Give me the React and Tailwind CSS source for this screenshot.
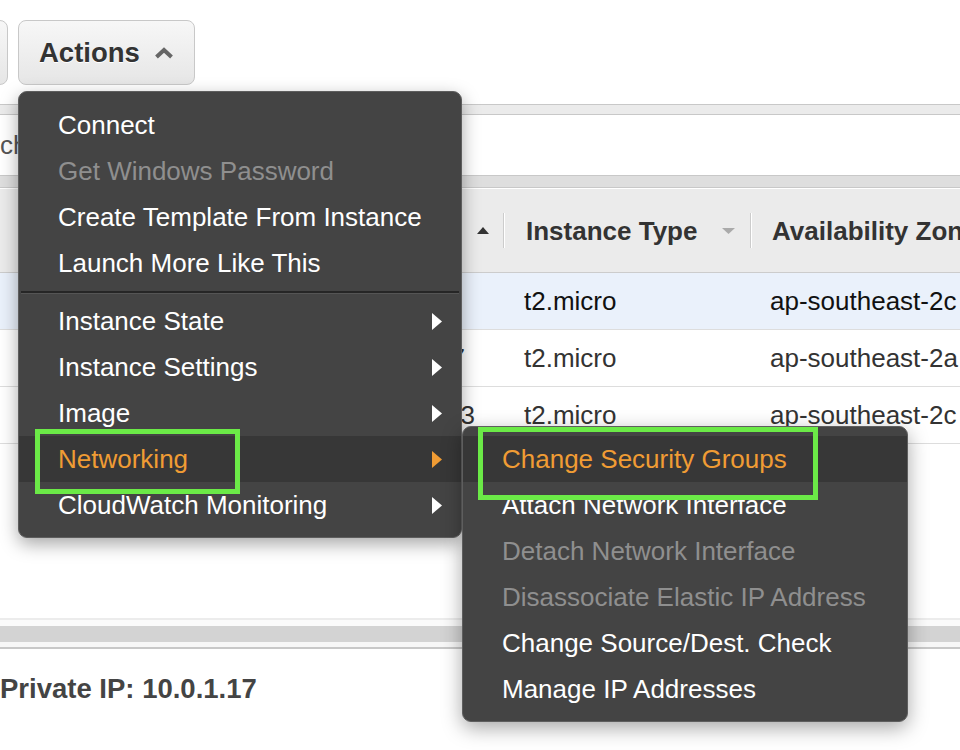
import React from "react";

const RightTri = ({ color = "#ffffff" }) => (
  <svg width="10" height="17" viewBox="0 0 10 17" className="shrink-0">
    <polygon points="0,0 10,8.5 0,17" fill={color} />
  </svg>
);

const mainItems = [
  { label: "Connect" },
  { label: "Get Windows Password", disabled: true },
  { label: "Create Template From Instance" },
  { label: "Launch More Like This" },
  { sep: true },
  { label: "Instance State", sub: true },
  { label: "Instance Settings", sub: true },
  { label: "Image", sub: true },
  { label: "Networking", sub: true, active: true },
  { label: "CloudWatch Monitoring", sub: true },
];

const subItems = [
  { label: "Change Security Groups", active: true },
  { label: "Attach Network Interface" },
  { label: "Detach Network Interface", disabled: true },
  { label: "Disassociate Elastic IP Address", disabled: true },
  { label: "Change Source/Dest. Check" },
  { label: "Manage IP Addresses" },
];

const rows = [
  { id: "i-0c4e9a1b7d2f3e6a5", type: "t2.micro", zone: "ap-southeast-2c", bg: "bg-[#eaf1fb]", color: "text-[#111111]", pad: "pr-[44px]" },
  { id: "i-07d1f2a3b4c5e6d7", type: "t2.micro", zone: "ap-southeast-2a", bg: "bg-white", color: "text-[#333333]", pad: "pr-[38px]" },
  { id: "i-0a9b8c7d6e5f4e3", type: "t2.micro", zone: "ap-southeast-2c", bg: "bg-white", color: "text-[#333333]", pad: "pr-[28px]" },
];

function MenuItem({ item }) {
  if (item.sep) {
    return (
      <div className="h-[12px] flex flex-col justify-center px-[2px]">
        <div className="h-[2px] bg-[#262626]" />
        <div className="h-[1px] bg-[#555555]" />
      </div>
    );
  }
  const color = item.active
    ? "text-[#f09c34]"
    : item.disabled
    ? "text-[#8f8f8f]"
    : "text-white";
  return (
    <div
      className={`h-[46px] flex items-center justify-between pl-[39px] pr-[19px] ${
        item.active ? "bg-[#373737]" : ""
      }`}
    >
      <span className={`${color} whitespace-nowrap`}>{item.label}</span>
      {item.sub && <RightTri color={item.active ? "#f09c34" : "#ffffff"} />}
    </div>
  );
}

export default function App() {
  return (
    <div className="relative w-[960px] h-[750px] overflow-hidden bg-white font-['Liberation_Sans',Arial,sans-serif] text-[26px] leading-none">
      {/* toolbar */}
      <div className="h-[104px] flex items-start pt-[20px] gap-[10px]">
        <div className="shrink-0 w-[40px] ml-[-32px] h-[65px] rounded-[8px] border border-[#c8c8c8] bg-gradient-to-b from-[#f7f7f7] to-[#e6e6e6]" />
        <div className="shrink-0 w-[177px] h-[65px] rounded-[8px] border border-[#c8c8c8] bg-gradient-to-b from-[#f7f7f7] to-[#e6e6e6] flex items-center pl-[20px] gap-[14px]">
          <span className="font-bold text-[27.5px] text-[#333333] [text-shadow:0_1px_0_#ffffff]">Actions</span>
          <svg width="20" height="12" viewBox="0 0 20 12">
            <polyline points="2.5,10 10,3 17.5,10" fill="none" stroke="#666666" strokeWidth="4" strokeLinejoin="miter" />
          </svg>
        </div>
      </div>

      {/* band 1 */}
      <div className="h-[11px] border-y border-[#c8c8c8] bg-[#ebebeb]" />

      {/* search */}
      <div className="h-[60px] flex items-center">
        <span className="shrink-0 ml-[-55px] text-[#555555]">Search</span>
      </div>

      {/* band 2 */}
      <div className="h-[13px] border-y border-[#c8c8c8] bg-[#dedede]" />
      <div className="h-[1px] bg-white" />

      {/* header */}
      <div className="h-[84px] flex items-center bg-[#ebebeb] border-b border-[#cccccc]">
        <div className="shrink-0 w-[503px] flex justify-end pr-[14px]">
          <svg width="12" height="7" viewBox="0 0 12 7">
            <polygon points="0,7 6,0 12,7" fill="#333333" />
          </svg>
        </div>
        <div className="shrink-0 w-[2px] h-[35px] border-l border-[#cccccc] bg-white" />
        <div className="shrink-0 w-[245px] flex items-center justify-between pl-[21px] pr-[15px]">
          <span className="font-bold text-[#333333] whitespace-nowrap">Instance Type</span>
          <svg width="13" height="6" viewBox="0 0 13 6">
            <polygon points="0,0 13,0 6.5,6" fill="#aaaaaa" />
          </svg>
        </div>
        <div className="shrink-0 w-[2px] h-[35px] border-l border-[#cccccc] bg-white" />
        <div className="shrink-0 pl-[20px] font-bold text-[#333333] whitespace-nowrap">Availability Zone</div>
      </div>

      {/* rows */}
      {rows.map((r, i) => (
        <div key={i} className={`h-[57px] flex items-center border-b border-[#dddddd] ${r.bg} ${r.color}`}>
          <div className={`shrink-0 w-[503px] flex justify-end ${r.pad}`}>
            <span className="whitespace-nowrap">{r.id}</span>
          </div>
          <div className="shrink-0 w-[247px] pl-[21px]">{r.type}</div>
          <div className="shrink-0 pl-[20px] whitespace-nowrap">{r.zone}</div>
        </div>
      ))}

      {/* empty */}
      <div className="h-[174px]" />

      {/* bottom bands */}
      <div className="h-[2px] bg-[#ececec]" />
      <div className="h-[6px] bg-[#fafafa]" />
      <div className="h-[16px] bg-[#d3d3d3]" />
      <div className="h-[5px] bg-[#f7f7f7]" />
      <div className="h-[2px] bg-[#c8c8c8]" />

      <div className="h-[80px] flex items-center">
        <span className="font-bold text-[27.5px] text-[#444444] whitespace-nowrap">Private IP: 10.0.1.17</span>
      </div>

      {/* main menu */}
      <div className="absolute left-[18px] top-[91px] w-[444px] h-[447px] rounded-[9px] bg-[#444444] border border-[#5e5e5e] shadow-[0_6px_18px_rgba(0,0,0,0.35)] pt-[10px] pb-[10px] overflow-hidden">
        {mainItems.map((it, i) => (
          <MenuItem key={i} item={it} />
        ))}
      </div>

      {/* submenu */}
      <div className="absolute left-[462px] top-[426px] w-[446px] h-[296px] rounded-[9px] bg-[#444444] border border-[#5e5e5e] shadow-[0_6px_20px_rgba(0,0,0,0.35)] pt-[9px] pb-[10px] overflow-hidden">
        {subItems.map((it, i) => (
          <MenuItem key={i} item={it} />
        ))}
      </div>

      {/* green highlight boxes */}
      <div className="absolute left-[35px] top-[429px] w-[205px] h-[65px] border-[5px] border-[#6bea47]" />
      <div className="absolute left-[478px] top-[427px] w-[340px] h-[73px] border-[5px] border-[#6bea47]" />
    </div>
  );
}
